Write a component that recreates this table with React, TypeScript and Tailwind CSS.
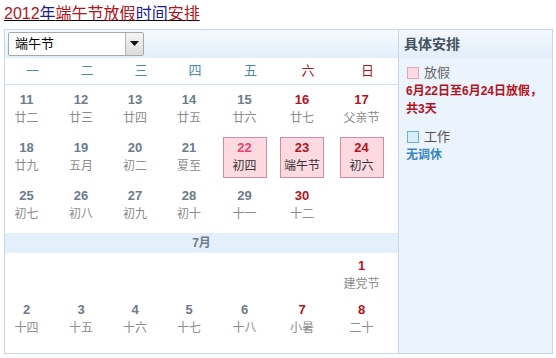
const FONT = { fontFamily: '"Liberation Sans", "Noto Sans CJK SC", sans-serif' };

type Day = { d?: number; l?: string; red?: boolean; box?: "first" | "on" };

const WEEK = ["一", "二", "三", "四", "五", "六", "日"];

const JUNE: Day[][] = [
  [
    { d: 11, l: "廿二" },
    { d: 12, l: "廿三" },
    { d: 13, l: "廿四" },
    { d: 14, l: "廿五" },
    { d: 15, l: "廿六" },
    { d: 16, l: "廿七", red: true },
    { d: 17, l: "父亲节", red: true },
  ],
  [
    { d: 18, l: "廿九" },
    { d: 19, l: "五月" },
    { d: 20, l: "初二" },
    { d: 21, l: "夏至" },
    { d: 22, l: "初四", box: "first" },
    { d: 23, l: "端午节", box: "on", red: true },
    { d: 24, l: "初六", box: "on", red: true },
  ],
  [
    { d: 25, l: "初七" },
    { d: 26, l: "初八" },
    { d: 27, l: "初九" },
    { d: 28, l: "初十" },
    { d: 29, l: "十一" },
    { d: 30, l: "十二", red: true },
    {},
  ],
];

const JULY: Day[][] = [
  [{}, {}, {}, {}, {}, {}, { d: 1, l: "建党节", red: true }],
  [
    { d: 2, l: "十四" },
    { d: 3, l: "十五" },
    { d: 4, l: "十六" },
    { d: 5, l: "十七" },
    { d: 6, l: "十八" },
    { d: 7, l: "小暑", red: true },
    { d: 8, l: "二十", red: true },
  ],
];

const COLS = "grid grid-cols-[55px_54px_54px_54px_57px_58px_1fr]";

function Cell({ day }: { day: Day }) {
  if (!day.d) return <div />;
  const numColor =
    day.box === "first" ? "text-[#e8436a]" : day.red ? "text-[#b5121b]" : "text-[#6c7a8a]";
  const lunarColor = day.box ? "text-[#333]" : "text-[#8c8c8c]";
  return (
    <div className="flex justify-center pr-3">
      <div
        className={`flex h-[41px] w-[44px] flex-col items-center justify-center ${
          day.box ? "border border-[#d48ca5] bg-[#fdd9e1]" : ""
        }`}
      >
        <span className={`text-[13px] font-bold leading-[19px] ${numColor}`}>{day.d}</span>
        <span className={`whitespace-nowrap text-[12px] leading-[19px] ${lunarColor}`}>{day.l}</span>
      </div>
    </div>
  );
}

export default function App() {
  return (
    <div className="h-[358px] w-[556px] bg-white" style={FONT}>
      {/* title */}
      <div className="h-[29px] pl-1 text-[16px] leading-[28px] underline">
        <span className="text-[#b5121b]">2012</span>
        <span className="text-[#1b1b9c]">年</span>
        <span className="text-[#b5121b]">端午节放假</span>
        <span className="text-[#1b1b9c]">时间</span>
        <span className="text-[#b5121b]">安排</span>
      </div>

      <div className="ml-1 flex h-[325px] w-[549px] border border-[#c5d7e8]">
        {/* calendar */}
        <div className="flex w-[393px] flex-col">
          <div className="flex h-[28px] items-center bg-gradient-to-b from-[#f6fafe] to-[#e1eefa] pl-[3px]">
            <div className="flex h-[24px] w-[136px] items-center rounded-[2px] border border-[#a9a9a9] bg-white">
              <span className="flex-1 pl-[6px] text-[13px] text-black">端午节</span>
              <div className="flex h-full w-[18px] items-center justify-center border-l border-[#b5b5b5] bg-gradient-to-b from-[#f4f4f4] to-[#dcdcdc]">
                <svg width="9" height="5" viewBox="0 0 9 5">
                  <path d="M0 0h9L4.5 5z" fill="#111" />
                </svg>
              </div>
            </div>
          </div>

          <div className={`${COLS} h-[28px] items-center border-b border-[#d3e1ec] text-[13px]`}>
            {WEEK.map((w, i) => (
              <div key={w} className={`text-center ${i > 4 ? "text-[#b5121b]" : "text-[#4a8aae]"}`}>
                {w}
              </div>
            ))}
          </div>

          <div className="pb-1">
            {JUNE.map((row, r) => (
              <div key={r} className={`${COLS} h-[48px] items-center`}>
                {row.map((day, i) => (
                  <Cell key={i} day={day} />
                ))}
              </div>
            ))}
          </div>

          <div className="flex h-[20px] items-center justify-center bg-[#e3effb] text-[12px] font-bold text-[#6c7a8a]">
            7月
          </div>

          <div className="pb-3">
            {JULY.map((row, r) => (
              <div key={r} className={`${COLS} h-[44px] items-start pt-[1px]`}>
                {row.map((day, i) => (
                  <Cell key={i} day={day} />
                ))}
              </div>
            ))}
          </div>
        </div>

        {/* arrangement */}
        <div className="flex flex-1 flex-col border-l border-[#c5d7e8] bg-[#ebf3fd]">
          <div className="flex h-[28px] items-center bg-gradient-to-b from-[#f3f8fd] to-[#e2eefa] pl-[5px] text-[14px] font-bold text-[#44525f]">
            具体安排
          </div>
          <div className="px-[7px] pt-[8px]">
            <div className="flex items-center gap-[5px] pl-[1px] text-[13px] leading-[14px] text-[#666]">
              <span className="h-[12px] w-[12px] border border-[#e3a6b8] bg-[#fdd9e1]" />
              放假
            </div>
            <div className="mt-[2px] text-[12px] font-bold leading-[18px] text-[#b5121b]">
              6月22日至6月24日放假，共3天
            </div>
            <div className="mt-[12px] flex items-center gap-[5px] pl-[1px] text-[13px] leading-[14px] text-[#555]">
              <span className="h-[12px] w-[12px] border border-[#6ab0d2] bg-[#d8effb]" />
              工作
            </div>
            <div className="mt-[2px] text-[12px] font-bold leading-[18px] text-[#3a87bd]">无调休</div>
          </div>
        </div>
      </div>
    </div>
  );
}
